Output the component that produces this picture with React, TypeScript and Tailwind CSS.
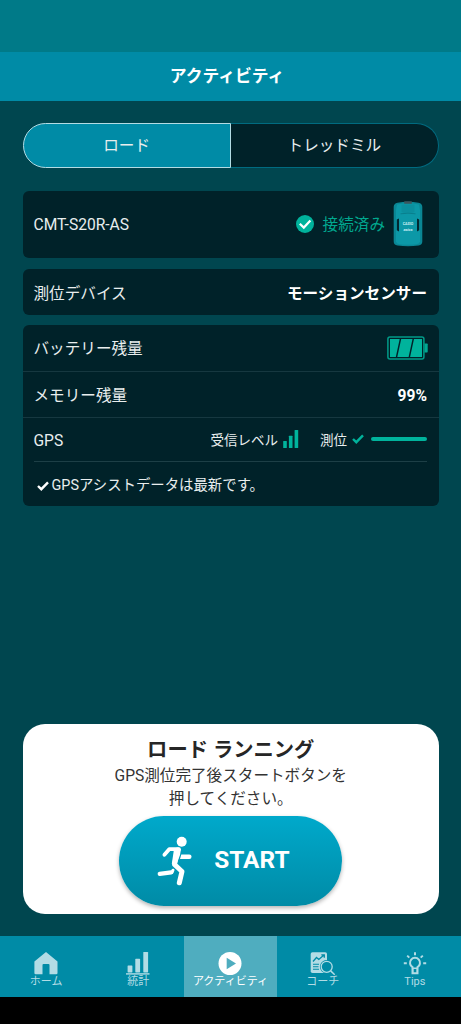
import type { ReactNode } from "react";
import clsx from "clsx";

function CheckIcon({ className }: { className?: string }) {
  return (
    <svg viewBox="0 0 12 10" className={className} fill="none">
      <path d="M1 5 4.3 8.2 11 1.4" stroke="currentColor" strokeWidth="2.4" />
    </svg>
  );
}

function ConnectedIcon() {
  return (
    <svg viewBox="0 0 18 18" className="mb-px size-[18px]">
      <circle cx="9" cy="9" r="9" fill="#00b39c" />
      <path
        d="m3.8 8.8 4 3.8 6.6-7.1"
        fill="none"
        stroke="#fff"
        strokeWidth="2.2"
      />
    </svg>
  );
}

function SensorDevice() {
  return (
    <svg viewBox="0 0 30 46" className="mb-px h-[46px] w-[30px]">
      <path
        d="M4.500 1.800Q15-.2 25.500 1.800 29.300 2.500 29.300 6v34.500q0 3.500-3.800 4Q15 46 4.500 44.500.7 44 .7 40.500V6q0-3.500 3.800-4.200Z"
        fill="#0a8795"
      />
      <path
        d="M4 3.500Q15 .8 26 3.500l1 5.500v31.500q-.5 2.200-3 2.700-9 1-18 0-2.500-.5-3-2.700V9Z"
        fill="#0c98a7"
      />
      <path d="M8.500 3.500h13v6.800l-1.500 1.500H10l-1.500-1.500Z" fill="#0b8f9e" />
      <path d="M7.500 12.800q7.500-1.200 15 0" fill="none" stroke="#077987" strokeWidth=".8" />
      <rect x="11.200" y=".3" width="7.600" height="2.400" rx=".5" fill="#3d565d" />
      <path d="M3.800 18.500 6 17.500v13l-2.200-1.200ZM26.200 18.500 24 17.500v13l2.200-1.200Z" fill="#022830" />
      <text
        x="15"
        y="24"
        textAnchor="middle"
        fontSize="3.600"
        fontWeight="700"
        fill="#c9eff2"
      >
        CASIO
      </text>
      <text
        x="15"
        y="30"
        textAnchor="middle"
        fontSize="4"
        fontWeight="700"
        fontStyle="italic"
        fill="#c9eff2"
      >
        asics
      </text>
    </svg>
  );
}

function BatteryIcon() {
  return (
    <svg viewBox="0 0 41 24" className="h-6 w-[41px]">
      <rect
        x=".9"
        y=".9"
        width="36"
        height="22"
        rx="2"
        fill="none"
        stroke="#009b88"
        strokeWidth="1.500"
      />
      <path d="M37.500 7.500H40a.7.7 0 0 1 .7.7v7.600a.7.7 0 0 1-.7.7h-2.500Z" fill="#00a892" />
      <path
        d="M3 3h9.700L8.800 21H3ZM14.200 3h11.300l-3.900 18H10.300ZM27 3h8v18H23.100Z"
        fill="#00b39c"
      />
    </svg>
  );
}

function SignalIcon() {
  return (
    <svg viewBox="0 0 16 18" className="h-[18px] w-4" fill="#00b39c">
      <rect x=".2" y="11" width="3.600" height="7" rx=".5" />
      <rect x="5.900" y="5.700" width="3.600" height="12.300" rx=".5" />
      <rect x="11.600" y="0" width="3.600" height="18" rx=".5" />
    </svg>
  );
}

function RunnerIcon() {
  return (
    <svg viewBox="0 0 36 50" className="h-[50px] w-9" fill="none">
      <circle cx="24.700" cy="5.700" r="5" fill="#fff" />
      <g
        stroke="#fff"
        strokeLinecap="round"
        strokeLinejoin="round"
      >
        <path strokeWidth="3.800" d="M7.400 18.800 12.200 13.200H22" />
        <path strokeWidth="5" d="M20.500 14 17.500 28.500 25 35.500 22.300 46.800" />
        <path strokeWidth="4.200" d="M2.700 37.800 14.200 36.300" />
        <path strokeWidth="3" d="M15 36.500 16 34.200" />
      </g>
      <path d="M17 13h7l-1 6-3 8-5.200 1Z" fill="#fff" />
      <path d="M24.300 18.500h8a2.200 2.200 0 0 1 0 4.500h-9.300Z" fill="#fff" />
    </svg>
  );
}

function HomeIcon() {
  return (
    <svg viewBox="0 0 24 23" className="h-[23px] w-6">
      <path
        d="M12 0 23.500 9.500V21a1.300 1.300 0 0 1-1.300 1.300H15.500v-9.200q0-1-1-1h-5q-1 0-1 1v9.200H1.700A1.300 1.300 0 0 1 .4 21V9.500Z"
        fill="currentColor"
      />
    </svg>
  );
}

function StatsIcon() {
  return (
    <svg viewBox="0 0 24 23" className="h-[23px] w-6" fill="currentColor">
      <rect x="1.600" y="13.400" width="4.800" height="7" rx=".6" />
      <rect x="9.300" y="6.800" width="4.800" height="13.600" rx=".6" />
      <rect x="17.300" y="0" width="4.800" height="20.400" rx=".6" />
      <rect x="0" y="21.200" width="23.500" height="1.400" />
    </svg>
  );
}

function PlayIcon() {
  return (
    <svg viewBox="0 0 24 24" className="size-6">
      <circle cx="12" cy="11.500" r="11.500" fill="#fff" />
      <path d="M8.700 5.700v11.600L18 11.500Z" fill="#4fadbf" />
    </svg>
  );
}

function CoachIcon() {
  return (
    <svg viewBox="0 0 26 24" className="h-6 w-[26px]">
      <rect x=".7" y=".2" width="16.300" height="20.800" rx="1.800" fill="currentColor" />
      <g fill="none" stroke="#008ba6">
        <path strokeWidth="1.300" d="m3 9.500 3.500-4 2.300 2L14 3M11.300 2.800h3v3" />
        <path strokeWidth="1.100" d="M3 12.200h6M3 14.700h5.500M3 17.200h6" />
      </g>
      <circle cx="16.700" cy="14.800" r="6.800" fill="#008ba6" />
      <circle
        cx="16.700"
        cy="14.800"
        r="5.500"
        fill="#008ba6"
        stroke="currentColor"
        strokeWidth="1.300"
      />
      <path d="m20.700 18.900 4 3.800" stroke="currentColor" strokeWidth="1.500" />
    </svg>
  );
}

function TipsIcon() {
  return (
    <svg viewBox="0 0 24 23" className="h-[23px] w-6" fill="none" stroke="currentColor">
      <path
        strokeWidth="2"
        d="M9.500 16v-.8a5 5 0 1 1 5 0v.8"
      />
      <path strokeWidth="2" d="M12 .3v3M.8 11.300h3M20.200 11.300h3" />
      <path strokeWidth="1.900" d="m4.200 3.600 2.100 2.100M19.800 3.600l-2.100 2.100" />
      <path
        fill="currentColor"
        stroke="none"
        fillRule="evenodd"
        d="M8.500 15.400h7v6.900h-7ZM10.700 17v3.300h2.600V17Z"
      />
    </svg>
  );
}

function Card({ className, children }: { className?: string; children: ReactNode }) {
  return (
    <div
      className={clsx(
        "flex items-center justify-between rounded-[6px] bg-[#002229] pr-3 pl-[11px]",
        className
      )}
    >
      {children}
    </div>
  );
}

const tabs = [
  { label: "ホーム", icon: <HomeIcon /> },
  { label: "統計", icon: <StatsIcon /> },
  { label: "アクティビティ", icon: <PlayIcon />, active: true },
  { label: "コーチ", icon: <CoachIcon /> },
  { label: "Tips", icon: <TipsIcon /> },
];

export default function App() {
  return (
    <div className="flex h-[1024px] w-[461px] flex-col overflow-hidden bg-[#00464f] font-['Roboto','Noto_Sans_CJK_JP',sans-serif] text-[15.6px] leading-none text-[#e9eeee]">
      <div className="h-[52px] shrink-0 bg-[#007a88]" />
      <header className="flex h-[49px] shrink-0 items-center justify-center bg-[#008ba6] pr-[7px]">
        <h1 className="text-[16.8px] font-bold text-white">アクティビティ</h1>
      </header>

      <main className="flex flex-1 flex-col pr-[22px] pl-[22.5px] pt-[22px]">
        <div className="flex h-[45px] shrink-0">
          <button className="w-1/2 rounded-l-full border border-[#b3dce4] bg-[#008ba6] pt-[3px]">
            ロード
          </button>
          <button className="w-1/2 rounded-r-full border border-l-0 border-[#006b80] bg-[#002229] pt-[3px]">
            トレッドミル
          </button>
        </div>

        <Card className="mt-[23px] h-[67px] shrink-0">
          <span className="pt-0.5">CMT-S20R-AS</span>
          <div className="flex items-center text-[#00a88f]">
            <ConnectedIcon />
            <span className="ml-[9px] mr-[8px] pt-[3px]">接続済み</span>
            <SensorDevice />
            <span className="w-[4px]" />
          </div>
        </Card>

        <Card className="mt-[11px] h-[46px] shrink-0 pt-[5px]">
          <span>測位デバイス</span>
          <span className="font-bold text-white">モーションセンサー</span>
        </Card>

        <div className="mt-[10px] h-[181px] shrink-0 rounded-[6px] bg-[#002229]">
          <div className="flex h-[46.5px] items-center justify-between border-b border-[#163840] pr-[11px] pl-[11px]">
            <span className="pt-[5px]">バッテリー残量</span>
            <BatteryIcon />
          </div>
          <div className="flex h-[46px] items-center justify-between border-b border-[#163840] pt-[5px] pr-3 pl-[11px]">
            <span>メモリー残量</span>
            <span className="font-bold text-white">99%</span>
          </div>
          <div className="mr-3 ml-[11px] flex h-[44px] items-center border-b border-[#1d3f46]">
            <span className="pt-[5px]">GPS</span>
            <span className="ml-auto pt-[3px] text-[13.5px]">受信レベル</span>
            <span className="ml-[5px]">
              <SignalIcon />
            </span>
            <span className="ml-[21px] pt-[3px] text-[13.5px]">測位</span>
            <CheckIcon className="ml-[5px] h-[10px] w-3 text-[#00b39c]" />
            <span className="ml-[7px] h-1 w-14 rounded-full bg-[#00b39c]" />
          </div>
          <div className="flex h-[44.5px] items-center pt-1 pl-[14px]">
            <CheckIcon className="h-[10px] w-3 text-white" />
            <span className="ml-[3px] text-[14.4px]">GPSアシストデータは最新です。</span>
          </div>
        </div>

        <section className="mt-auto mb-[22px] flex h-[190.5px] flex-col items-center rounded-[22px] bg-white pt-[16px] text-[#333]">
          <h2 className="text-[20.3px] font-bold text-[#262626]">ロード ランニング</h2>
          <p className="mt-[5px] text-center leading-[23px]">
            GPS測位完了後スタートボタンを
            <br />
            押してください。
          </p>
          <button className="mt-[5px] flex h-[90px] w-[223px] items-center rounded-full bg-linear-to-b from-[#00a9cb] to-[#008ba6] pl-[38px] text-white shadow-[0_2px_4px_rgba(0,0,0,0.3)]">
            <RunnerIcon />
            <span className="ml-[21px] pb-[2px] text-[24.4px] font-bold">START</span>
          </button>
        </section>
      </main>

      <nav className="grid h-[61px] shrink-0 grid-cols-5 bg-[#008ba6]">
        {tabs.map((tab) => (
          <a
            key={tab.label}
            className={clsx(
              "flex flex-col items-center pt-[15.5px] text-[11px] whitespace-nowrap",
              tab.active ? "bg-[#4fadbf] text-white" : "text-[#b2dce5]"
            )}
          >
            <span className="flex h-[24px] items-start">{tab.icon}</span>
            <span className="leading-[12px]">{tab.label}</span>
          </a>
        ))}
      </nav>
      <div className="h-[27px] shrink-0 bg-black" />
    </div>
  );
}
